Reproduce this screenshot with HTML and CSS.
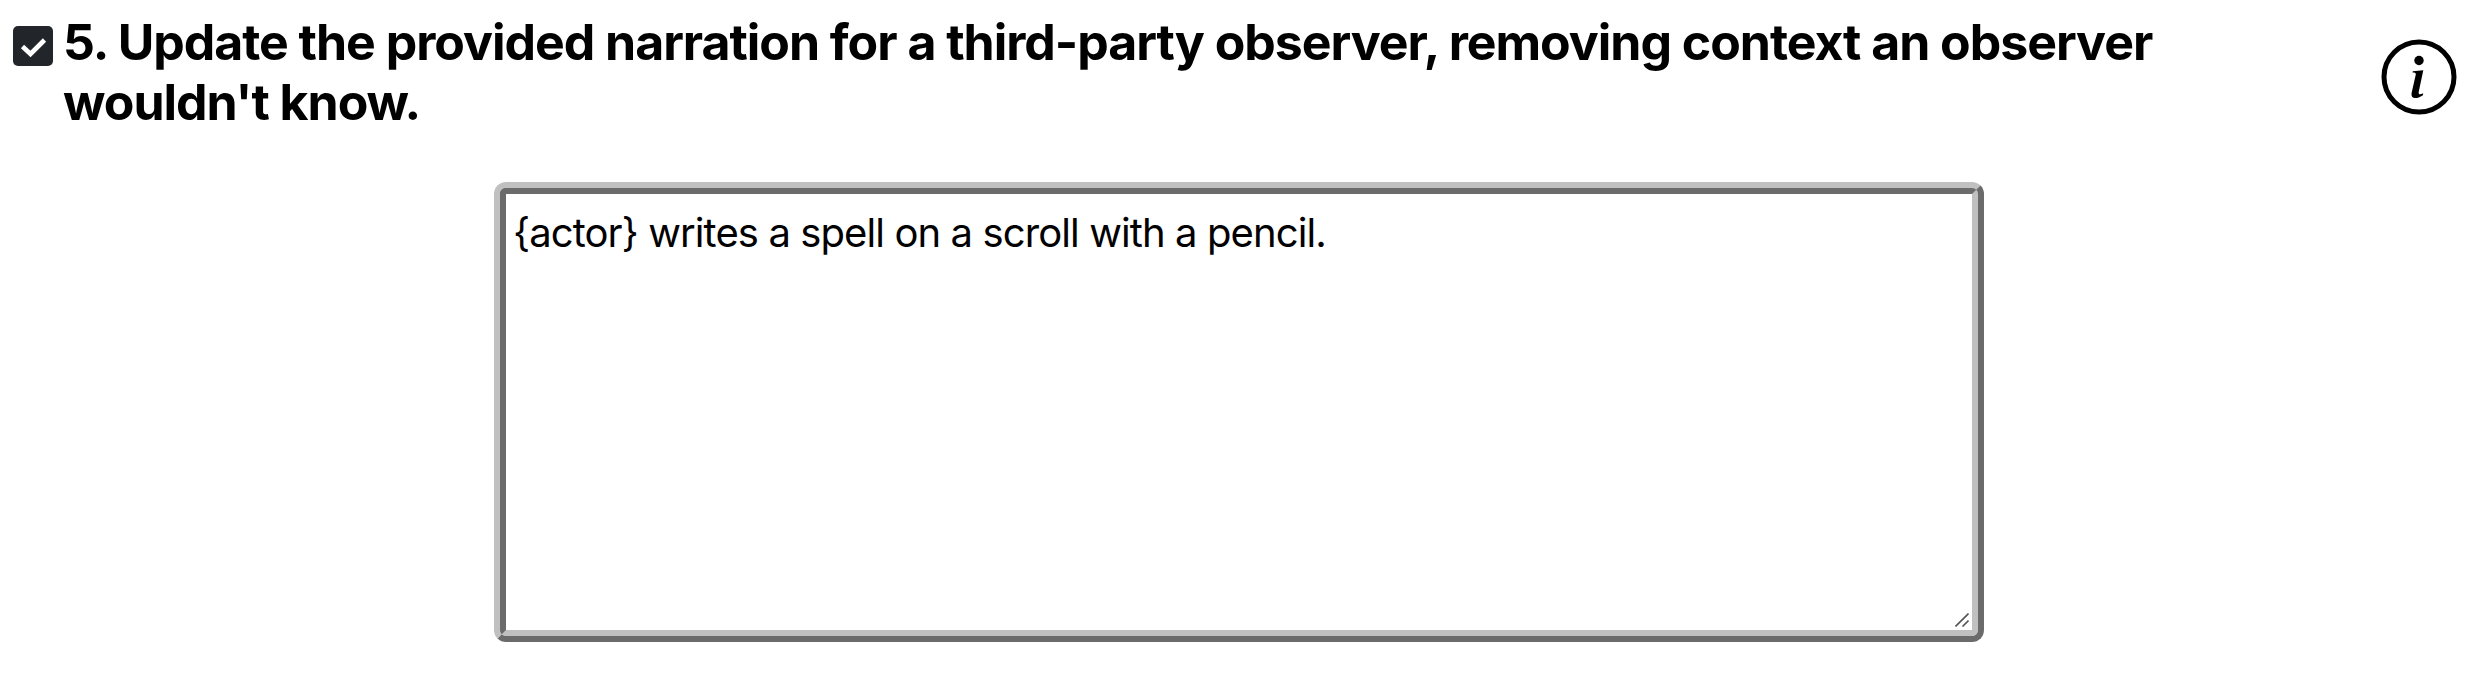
FILE: index.html
```
<!DOCTYPE html>
<html lang="en">
<head>
<meta charset="utf-8">
<title>Narration</title>
<link rel="stylesheet" href="styles.css">
</head>
<body>
<main class="step">
  <header class="step-header">
    <svg class="check" viewBox="0 0 40 40" role="img" aria-label="Checked"><rect width="40" height="40" rx="5" fill="#22262b"/><path d="M9.5 20.5 17.5 28 31.5 14" fill="none" stroke="#fff" stroke-width="4.6"/></svg>
    <h1 class="title">5. Update the provided narration for a third-party observer, removing context an observer<br>wouldn't know.</h1>
    <svg class="info" viewBox="0 0 76 76" role="img" aria-label="Information"><circle cx="38" cy="38" r="35" fill="none" stroke="#000" stroke-width="5"/><circle cx="38" cy="21.5" r="4.7"/><path d="M31.8 32.2 42.3 31.2 37.8 52.5C37.2 55.5 38.7 56.2 42.2 54.2L41.9 56.2C38.8 58.3 36.5 59.1 34.3 59.1 31.3 59.1 30 57.2 30.6 54.1L34.8 35.5C35.1 34 34.1 33.4 31.5 33.4Z"/></svg>
  </header>
  <section class="field">
    <div class="field-inner">
      <p class="text">{actor} writes a spell on a scroll with a pencil.</p>
      <svg class="grip" viewBox="0 0 14 14" aria-hidden="true"><path d="M.5 13.5 13.5.5M7.5 13.5 13.5 7.5" fill="none" stroke="#555" stroke-width="1.6"/></svg>
    </div>
  </section>
</main>
</body>
</html>
```
FILE: styles.css
```
* { box-sizing: border-box; }
body {
  margin: 0;
  background: #fff;
  color: #000;
  font-family: Inter, "Liberation Sans", sans-serif;
}
.step {
  display: flex;
  flex-direction: column;
  height: 682px;
}
.step-header {
  display: flex;
  height: 182px;
  padding: 12px 19px 0 13px;
}
.check {
  flex: none;
  width: 40px;
  height: 40px;
  margin-top: 14px;
}
.title {
  flex: 1;
  margin: 0 0 0 10px;
  font-size: 50px;
  font-weight: 700;
  line-height: 60px;
  letter-spacing: -1.03px;
  white-space: nowrap;
}
.info {
  flex: none;
  width: 76px;
  height: 76px;
  margin-top: 27px;
}
.field {
  display: flex;
  width: 1490px;
  height: 460px;
  margin-left: 494px;
  border: 6px solid;
  border-color: #c0c0c0 #6b6b6b #6b6b6b #c0c0c0;
  border-radius: 12px;
  background: #c0c0c0;
}
.field-inner {
  display: flex;
  flex: 1;
  flex-direction: column;
  justify-content: space-between;
  padding: 15px 3px 3px 7px;
  border: 6px solid;
  border-color: #6b6b6b #c0c0c0 #c0c0c0 #6b6b6b;
  border-radius: 6px;
  background: #fff;
}
.text {
  margin: 0;
  font-size: 40px;
  line-height: 48px;
  letter-spacing: -0.9px;
  white-space: nowrap;
}
.grip {
  align-self: flex-end;
  width: 14px;
  height: 14px;
}
```
